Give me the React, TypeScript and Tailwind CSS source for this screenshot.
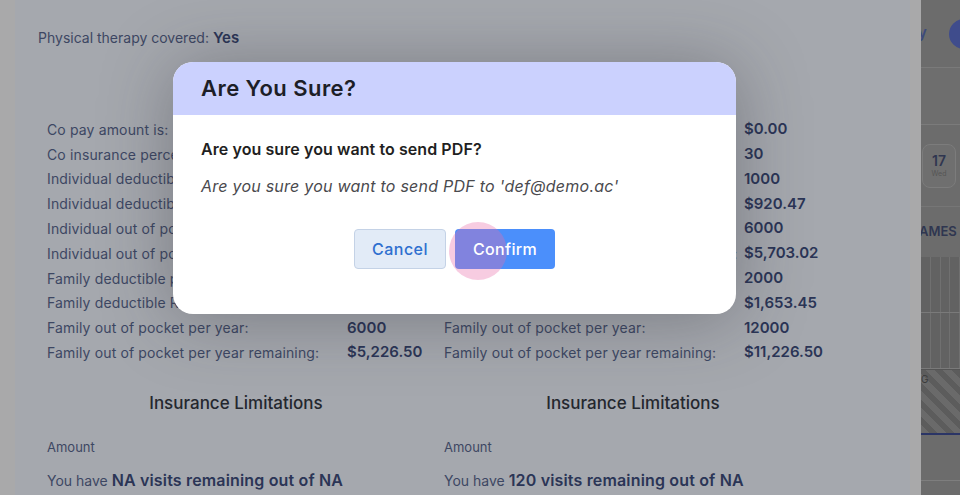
import React from 'react';

type Row = { label: string; value: string };

const leftRows: Row[] = [
    { label: 'Co pay amount is:', value: '$0.00' },
    { label: 'Co insurance percentage:', value: '20' },
    { label: 'Individual deductible per year:', value: '500' },
    { label: 'Individual deductible Remaining:', value: '$420.47' },
    { label: 'Individual out of pocket per year:', value: '3000' },
    { label: 'Individual out of pocket per year remaining:', value: '$2,703.02' },
    { label: 'Family deductible per year:', value: '1000' },
    { label: 'Family deductible Remaining:', value: '$653.45' },
    { label: 'Family out of pocket per year:', value: '6000' },
    { label: 'Family out of pocket per year remaining:', value: '$5,226.50' },
];

const rightRows: Row[] = [
    { label: 'Co pay amount is:', value: '$0.00' },
    { label: 'Co insurance percentage:', value: '30' },
    { label: 'Individual deductible per year:', value: '1000' },
    { label: 'Individual deductible Remaining:', value: '$920.47' },
    { label: 'Individual out of pocket per year:', value: '6000' },
    { label: 'Individual out of pocket per year remaining:', value: '$5,703.02' },
    { label: 'Family deductible per year:', value: '2000' },
    { label: 'Family deductible Remaining:', value: '$1,653.45' },
    { label: 'Family out of pocket per year:', value: '12000' },
    { label: 'Family out of pocket per year remaining:', value: '$11,226.50' },
];

const BenefitColumn: React.FC<{ rows: Row[]; visits: string }> = ({ rows, visits }) => (
    <div className="flex flex-col">
        <div className="flex flex-col">
            {rows.map(r => (
                <div key={r.label} className="flex items-center h-[24.8px]">
                    <span className="w-[300px] shrink-0 whitespace-nowrap text-[14px] tracking-[0.01em] text-[#3d4763]">{r.label}</span>
                    <span className="whitespace-nowrap text-[15px] font-semibold text-[#2b3556]">{r.value}</span>
                </div>
            ))}
        </div>
        <div className="w-[378px] mt-[26px] text-center text-[17px] font-medium leading-[24px] text-[#24272e]">Insurance Limitations</div>
        <div className="mt-[22px] text-[13px] leading-[20px] text-[#3d4763]">Amount</div>
        <div className="mt-[12px] whitespace-nowrap leading-[22px] text-[#3d4763]">
            <span className="text-[14px]">You have </span>
            <span className="text-[16px] font-semibold tracking-[0.01em] text-[#2b3556]">{visits} visits remaining out of NA</span>
        </div>
    </div>
);

const BehindPage: React.FC = () => (
    <div className="flex-1 flex flex-col bg-[#6c6c6c] overflow-hidden">
        <div className="h-[68px] flex items-center gap-[22px] border-b border-[#7a7a7a]">
            <span className="text-[15px] font-semibold text-[#3c4a7c] ml-[-3px]">y</span>
            <div className="w-[30px] h-[30px] rounded-full bg-[#3f4c8c] shrink-0" />
        </div>
        <div className="h-[57px] border-b border-[#7b7b7b] bg-[#6e6e6e]" />
        <div className="h-[82px] flex items-center border-b border-[#767676]">
            <div className="ml-[1px] w-[34px] h-[44px] rounded-[8px] border border-[#7c7c7c] bg-[#6f6f6f] flex flex-col items-center justify-center">
                <span className="text-[14px] font-semibold leading-[16px] text-[#2f3650]">17</span>
                <span className="text-[7px] leading-[10px] text-[#555]">Wed</span>
            </div>
        </div>
        <div className="h-[50px] flex items-center text-[13px] font-semibold text-[#2f3650] ml-[-2px] whitespace-nowrap">AMES C</div>
        <div className="h-[112px] flex flex-col">
            {[0, 1].map(i => (
                <div key={i} className="flex-1 flex border-b border-[#7a7a7a] bg-[#626262]">
                    {[0, 1, 2, 3].map(j => (
                        <div key={j} className="w-[11px] border-r border-[#707070]" />
                    ))}
                </div>
            ))}
        </div>
        <div className="h-[66px] border-t border-[#555] border-b-2 border-b-[#2b3566] bg-[repeating-linear-gradient(45deg,#6a6a6a_0px,#6a6a6a_6px,#5c5c5c_6px,#5c5c5c_12px)] text-[10px] text-[#3a3a3a] pt-[2px]">G</div>
        <div className="h-[46px] border-b border-[#7e7e7e]" />
    </div>
);

export default function App() {
    return (
        <div className="relative w-[960px] h-[495px] overflow-hidden font-['Inter',sans-serif]">
            <div className="flex h-full">
                <div className="w-[921px] shrink-0 flex bg-[#a9a9aa] pl-[15px] pr-[11px]">
                    <div className="flex-1 bg-[#a5a8ae] pl-[23px] pt-[27px]">
                        <div className="leading-[20px] whitespace-nowrap">
                            <span className="text-[14px] text-[#3d4763]">Physical therapy covered: </span>
                            <span className="text-[15px] font-semibold text-[#2b3556]">Yes</span>
                        </div>
                        <div className="mt-[69px] pl-[9px] grid grid-cols-[397px_397px]">
                            <BenefitColumn rows={leftRows} visits="NA" />
                            <BenefitColumn rows={rightRows} visits="120" />
                        </div>
                    </div>
                </div>
                <BehindPage />
            </div>

            <div className="absolute left-[173px] top-[62px] w-[563px] rounded-[20px] bg-white overflow-hidden shadow-[0_4px_70px_rgba(40,40,50,0.35)]">
                <div className="h-[53px] bg-[#cbd1fe] flex items-center px-[28px]">
                    <h2 className="text-[22px] font-semibold tracking-[0.02em] text-[#1d1e27]">Are You Sure?</h2>
                </div>
                <div className="px-[28px] pt-[22px] pb-[45px]">
                    <p className="text-[16px] font-semibold leading-[24px] tracking-[0.005em] text-[#1f1f22]">Are you sure you want to send PDF?</p>
                    <p className="mt-[13px] text-[16px] italic leading-[24px] tracking-[0.015em] text-[#4a4a4e]">Are you sure you want to send PDF to 'def@demo.ac'</p>
                    <div className="mt-[31px] flex justify-center gap-[9px]">
                        <button className="w-[92px] h-[40px] rounded-[4px] border border-[#c4d2e6] bg-[#e2ebf7] text-[16px] font-medium tracking-[0.03em] text-[#2e6fcf]">Cancel</button>
                        <button className="relative w-[100px] h-[40px] rounded-[4px] bg-[#4b8ffb] text-[16px] font-medium tracking-[0.02em] text-white overflow-visible">
                            <span className="absolute left-[-6px] top-[-7px] w-[58px] h-[58px] rounded-full bg-[rgba(232,110,170,0.35)]" />
                            <span className="relative">Confirm</span>
                        </button>
                    </div>
                </div>
            </div>
        </div>
    );
}
